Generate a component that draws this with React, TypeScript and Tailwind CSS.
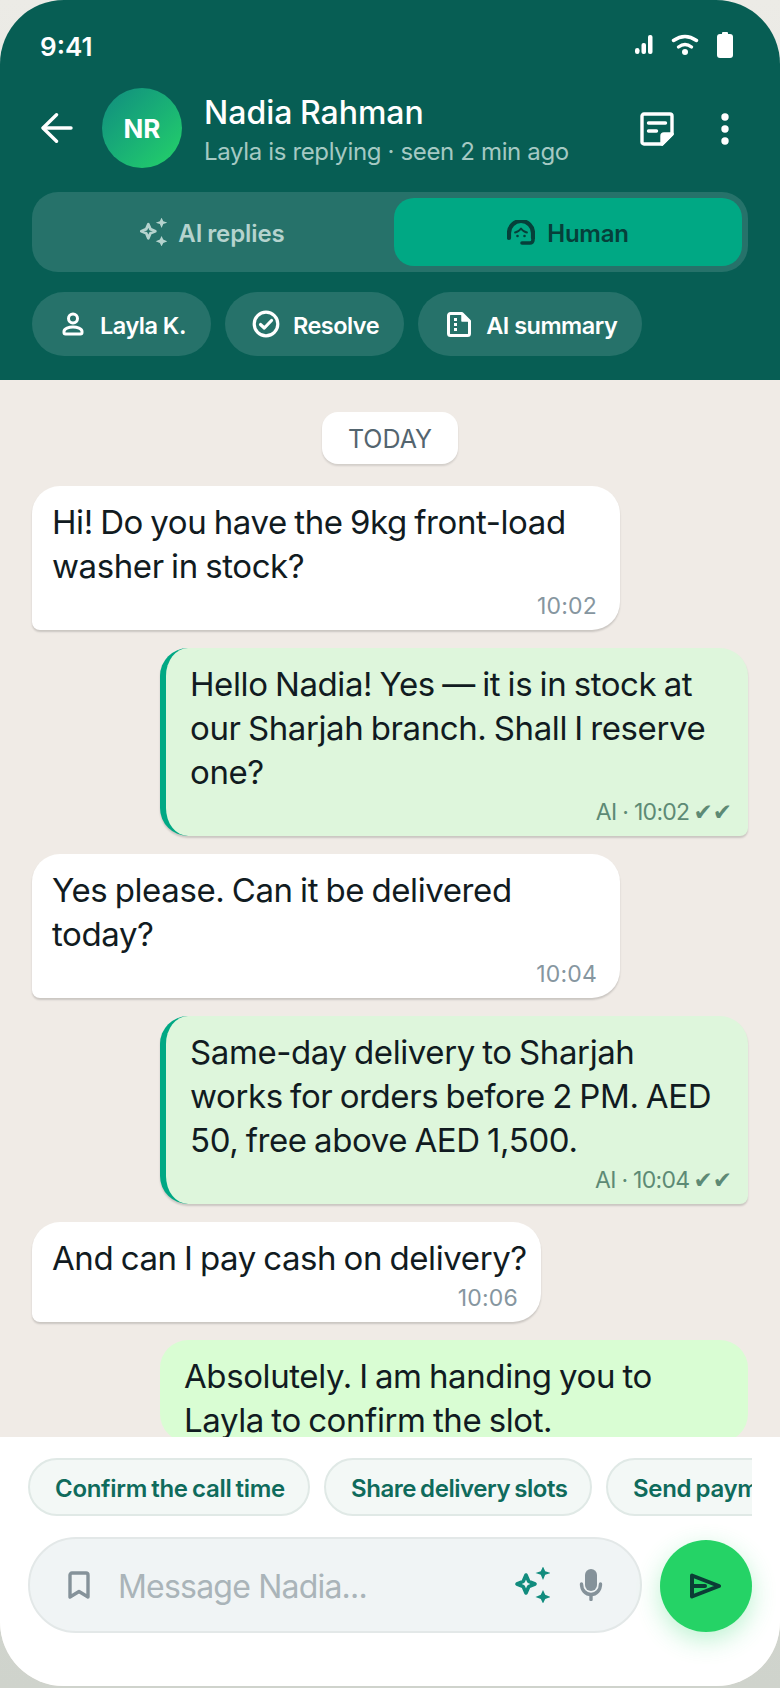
import type { ReactNode } from "react";

function Sparkle({ size, className }: { size: number; className?: string }) {
  return (
    <svg width={size} height={size} viewBox="0 0 36 36" className={`shrink-0 ${className ?? ""}`}>
      <path d="M12 8l2.700 6.300L21 17l-6.300 2.700L12 26l-2.700-6.300L3 17l6.300-2.700z" fill="none" stroke="currentColor" strokeWidth="3.600" strokeLinejoin="round" />
      <path d="M29 -0.500l2.200 4.800 5.300 1.700-5.300 1.700-2.200 5.300-2.200-5.300-5.300-1.700 5.300-1.700z" fill="currentColor" />
      <path d="M29 23l2.200 4.800 5.300 2.200-5.300 2-2.200 4.500-2.200-4.500-5.300-2 5.300-2.200z" fill="currentColor" />
    </svg>
  );
}

function Chip({ icon, label }: { icon: ReactNode; label: string }) {
  return (
    <div className="flex h-[64px] items-center gap-[12px] rounded-full bg-[#26726a] pl-[26px] pr-[25px] text-[23.5px] font-semibold tracking-[-0.5px] text-white">
      <span className="flex w-[30px] shrink-0 justify-center">{icon}</span>
      <span className="pt-[4px]">{label}</span>
    </div>
  );
}

function Incoming({ text, time, fit }: { text: ReactNode; time: string; fit?: boolean }) {
  return (
    <div className={`rounded-t-[28px] rounded-br-[28px] rounded-bl-[8px] bg-white pl-[20px] pr-[23px] pt-[14px] pb-[10px] shadow-[0_2px_2px_rgba(0,0,0,0.16)] ${fit ? "w-[509px]" : "w-[588px]"}`}>
      <div className="whitespace-nowrap text-[33px] leading-[44px] tracking-[-0.4px] [word-spacing:-1.5px] text-[#111b21]">{text}</div>
      <div className="mt-[4px] h-[28px] text-right text-[23px] leading-[28px] tracking-[0.2px] text-[#8696a0]">{time}</div>
    </div>
  );
}

function Outgoing({ text, time }: { text: ReactNode; time: string }) {
  return (
    <div className="ml-[128px] w-[588px] rounded-[28px] rounded-br-[8px] border-l-[6px] border-[#00a884] bg-[#def6dc] pl-[24px] pr-[16px] pt-[14px] pb-[10px] shadow-[0_2px_2px_rgba(0,0,0,0.16)]">
      <div className="whitespace-nowrap text-[33px] leading-[44px] tracking-[-0.4px] [word-spacing:-1.5px] text-[#111b21]">{text}</div>
      <div className="mt-[4px] flex h-[28px] items-center justify-end gap-[4px] text-[23px] leading-[28px] tracking-[-0.7px] text-[#5d8a75]">
        <span>{time}</span>
        <span className="font-['DejaVu_Sans',sans-serif] text-[23px] tracking-[0px]">✔✔</span>
      </div>
    </div>
  );
}

function Suggestion({ label, className }: { label: string; className: string }) {
  return (
    <div className={`flex h-[58px] shrink-0 items-center whitespace-nowrap rounded-full border-2 border-[#e0e9e6] bg-[#f3f8f6] pl-[25px] pt-[4px] text-[24px] font-semibold text-[#0f6b5c] ${className}`}>
      {label}
    </div>
  );
}

export default function App() {
  return (
    <div className="h-[1688px] w-[780px] bg-linear-to-b from-[#ecebe6] to-[#cfd3cc] font-['Inter',sans-serif]">
      <div className="flex h-[1686px] w-[780px] flex-col overflow-hidden rounded-[64px] bg-[#f0ebe6]">
        <header className="shrink-0 bg-[#075e54] px-[32px] pb-[24px] text-white">
          <div className="flex h-[88px] items-center justify-between pl-[8px] pr-[15px] pt-[2px]">
            <span className="mt-[4px] text-[26px] font-semibold leading-[36px]">9:41</span>
            <div className="flex items-center gap-[18px]">
              <svg width="18" height="22" viewBox="0 0 18 22" fill="white">
                <rect x="0" y="14" width="4.500" height="6" rx="2.200" />
                <rect x="6.500" y="9" width="4.500" height="11" rx="2" />
                <rect x="13" y="1" width="4.500" height="19" rx="2" />
              </svg>
              <svg width="28" height="22" viewBox="0 0 28 22" fill="none" stroke="white" strokeWidth="3.400" strokeLinecap="round">
                <path d="M2.500 6.500Q14 -1.500 25.500 6.500" />
                <path d="M7.500 13Q14 8 20.500 13" />
                <circle cx="14" cy="18" r="3" fill="white" stroke="none" />
              </svg>
              <svg width="16" height="26" viewBox="0 0 16 26" fill="white">
                <rect x="5" y="0" width="6" height="4" rx="1" />
                <rect x="0" y="2" width="16" height="24" rx="3" />
              </svg>
            </div>
          </div>
          <div className="flex h-[80px] items-center">
            <svg width="32" height="30" viewBox="0 0 32 30" fill="none" stroke="white" strokeWidth="3.400" strokeLinecap="round" strokeLinejoin="round" className="ml-[9px] shrink-0">
              <path d="M30 15H2.500" />
              <path d="M15.500 1.800L2 15l13.500 13.200" />
            </svg>
            <div className="ml-[29px] flex h-[80px] w-[80px] shrink-0 items-center justify-center rounded-full bg-linear-to-br from-[#128c7e] to-[#25d366] text-[26px] font-bold">NR</div>
            <div className="ml-[22px] flex-1 self-start pt-[5px]">
              <div className="text-[32px] font-medium leading-[40px] tracking-[0px] [word-spacing:-1px]">Nadia Rahman</div>
              <div className="mt-[4px] text-[24px] leading-[30px] tracking-[-0.35px] text-[#a5c9c3]">Layla is replying · seen 2 min ago</div>
            </div>
            <svg width="34" height="34" viewBox="0 0 34 34" fill="none" stroke="white" strokeWidth="3.400" strokeLinecap="round" strokeLinejoin="round" className="mt-[2px] shrink-0">
              <path d="M4 2h26a2 2 0 0 1 2 2v18L22 32H4a2 2 0 0 1-2-2V4a2 2 0 0 1 2-2z" />
              <path d="M8.500 11h17" />
              <path d="M8.500 19h8" />
              <path d="M32 22H24a2 2 0 0 0-2 2v8z" fill="white" />
            </svg>
            <svg width="8" height="32" viewBox="0 0 8 32" fill="white" className="ml-[47px] mr-[19px] mt-[2px] shrink-0">
              <circle cx="4" cy="4" r="3.700" />
              <circle cx="4" cy="16" r="3.700" />
              <circle cx="4" cy="28" r="3.700" />
            </svg>
          </div>
          <div className="mt-[24px] flex h-[80px] gap-[8px] rounded-[26px] bg-[#26726a] p-[6px]">
            <div className="flex flex-1 items-center justify-center gap-[11px] text-[24px] font-semibold tracking-[-0.1px] [word-spacing:-1px] text-[#b5d3ce]">
              <Sparkle size={28} />
              <span className="pt-[4px]">AI replies</span>
            </div>
            <div className="flex flex-1 items-center justify-center gap-[12px] rounded-[20px] bg-[#00a884] text-[24px] font-semibold tracking-[-0.25px] text-[#06403a]">
              <svg width="28" height="25" viewBox="8 8 28 25" fill="none" stroke="currentColor" strokeLinecap="round" strokeLinejoin="round" className="shrink-0">
                <path d="M10 26v-5a12 12 0 0 1 24 0v5" strokeWidth="4.200" />
                <path d="M16 20.500Q19.500 20 22 16.500Q24.500 20 28 20.500" strokeWidth="1.800" />
                <circle cx="18.500" cy="24" r="1.300" fill="currentColor" stroke="none" />
                <circle cx="25.500" cy="24" r="1.300" fill="currentColor" stroke="none" />
                <path d="M23 31h8a3 3 0 0 0 3-3" strokeWidth="3.600" />
              </svg>
              <span className="pt-[4px]">Human</span>
            </div>
          </div>
          <div className="mt-[20px] flex gap-[14px]">
            <Chip
              label="Layla K."
              icon={
                <svg width="22" height="24" viewBox="0 0 22 24" fill="none" stroke="white" strokeWidth="3" strokeLinejoin="round">
                  <circle cx="11" cy="6.500" r="4.500" />
                  <path d="M2 19.500c0-3 5-4.500 9-4.500s9 1.500 9 4.500v1a1.500 1.500 0 0 1-1.500 1.500h-15A1.500 1.500 0 0 1 2 20.500z" />
                </svg>
              }
            />
            <Chip
              label="Resolve"
              icon={
                <svg width="28" height="28" viewBox="0 0 28 28" fill="none" stroke="white" strokeWidth="3.200" strokeLinecap="round" strokeLinejoin="round">
                  <circle cx="14" cy="14" r="11.800" />
                  <path d="M8.500 14.500l3.800 3.500 7.200-7.500" />
                </svg>
              }
            />
            <Chip
              label="AI summary"
              icon={
                <svg width="24" height="25" viewBox="0 0 24 25" fill="none" stroke="white" strokeWidth="3" strokeLinejoin="round">
                  <path d="M3.500 1.500H15l7.500 7.500v12.500a2 2 0 0 1-2 2h-17a2 2 0 0 1-2-2v-18a2 2 0 0 1 2-2z" />
                  <path d="M15 2v7h7z" fill="white" strokeWidth="1.500" />
                  <rect x="7" y="6" width="3" height="3" fill="white" stroke="none" />
                  <rect x="7" y="11" width="3" height="3" fill="white" stroke="none" />
                  <rect x="7" y="16" width="3" height="3" fill="white" stroke="none" />
                </svg>
              }
            />
          </div>
        </header>

        <main className="min-h-0 flex-1 overflow-hidden px-[32px] pt-[32px]">
          <div className="mb-[22px] flex justify-center">
            <div className="flex h-[52px] w-[136px] items-center justify-center rounded-[16px] bg-white pt-[4px] text-[25px] tracking-[0px] text-[#54656f] shadow-[0_2px_2px_rgba(0,0,0,0.12)]">TODAY</div>
          </div>
          <div className="flex flex-col gap-[18px]">
            <Incoming text={<>Hi! Do you have the 9kg front-load<br />washer in stock?</>} time="10:02" />
            <Outgoing text={<>Hello Nadia! Yes — it is in stock at<br />our Sharjah branch. Shall I reserve<br />one?</>} time="AI · 10:02" />
            <Incoming text={<>Yes please. Can it be delivered<br />today?</>} time="10:04" />
            <Outgoing text={<>Same-day delivery to Sharjah<br />works for orders before 2 PM. AED<br />50, free above AED 1,500.</>} time="AI · 10:04" />
            <Incoming fit text="And can I pay cash on delivery?" time="10:06" />
            <div className="ml-[128px] w-[588px] rounded-[28px] bg-[#d9fdd3] pl-[24px] pr-[16px] pt-[14px]">
              <div className="text-[33px] leading-[44px] tracking-[-0.4px] [word-spacing:-1.5px] text-[#111b21]">Absolutely. I am handing you to<br />Layla to confirm the slot.</div>
            </div>
          </div>
        </main>

        <footer className="h-[249px] shrink-0 bg-white pt-[21px]">
          <div className="ml-[28px] flex w-[724px] gap-[14px] overflow-hidden">
            <Suggestion label="Confirm the call time" className="w-[282px] tracking-[-0.3px] [word-spacing:-1.5px]" />
            <Suggestion label="Share delivery slots" className="w-[268px] tracking-[-0.45px] [word-spacing:-1.5px]" />
            <Suggestion label="Send payment link" className="w-[260px] tracking-[-0.3px] [word-spacing:-1.5px]" />
          </div>
          <div className="ml-[28px] mt-[21px] flex items-center gap-[18px]">
            <div className="flex h-[96px] w-[614px] items-center rounded-[48px] border-2 border-[#e3e8e8] bg-[#f0f4f5] pl-[38px] pr-[37px]">
              <svg width="22" height="28" viewBox="0 0 22 28" fill="none" stroke="#85929a" strokeWidth="3.400" strokeLinejoin="round" className="shrink-0">
                <path d="M2 4a2 2 0 0 1 2-2h14a2 2 0 0 1 2 2v22l-9-5.500L2 26z" />
              </svg>
              <span className="ml-[28px] flex-1 pt-[4px] text-[32px] tracking-[-0.8px] text-[#aab4b9]">Message Nadia...</span>
              <Sparkle size={36} className="text-[#128c7e]" />
              <svg width="24" height="32" viewBox="0 0 24 32" fill="none" stroke="#85929a" strokeWidth="3.400" strokeLinecap="round" className="ml-[29px] shrink-0">
                <rect x="6" y="0" width="12" height="22" rx="6" fill="#85929a" stroke="none" />
                <path d="M2.500 15c0 6 4 10.500 9.500 10.500s9.500-4.500 9.500-10.500" />
                <path d="M12 26v4.500" />
              </svg>
            </div>
            <div className="mt-[2px] flex h-[92px] w-[92px] items-center justify-center rounded-full bg-[#25d366] shadow-[0_8px_24px_rgba(37,211,102,0.3)]">
              <svg width="32" height="26" viewBox="0 0 32 26" fill="none" stroke="#0b3d36" strokeWidth="4" strokeLinejoin="round" strokeLinecap="round">
                <path d="M2 2.500L29 13 2 23.500z" />
                <path d="M2 13h13" />
              </svg>
            </div>
          </div>
        </footer>
      </div>
    </div>
  );
}
